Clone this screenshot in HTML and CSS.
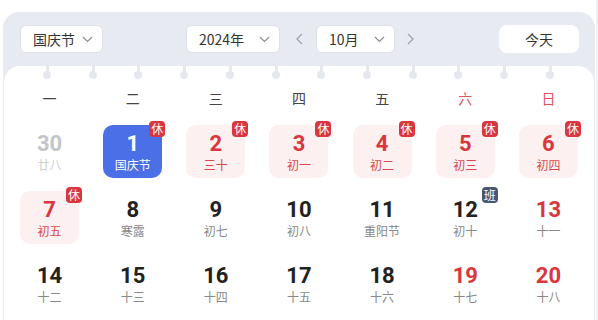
FILE: index.html
```html
<!DOCTYPE html>
<html lang="zh-CN">
<head>
    <meta charset="UTF-8">
    <meta name="viewport" content="width=device-width, initial-scale=1.0">
    <title>日历</title>
    <link rel="stylesheet" href="styles.css">
</head>
<body>
<div class="page">
    <div class="calendar">
        <div class="toolbar">
            <div class="select holiday">
                <span>国庆节</span>
                <svg class="chevron" width="11" height="7" viewBox="0 0 11 7"><path d="M1 1l4.5 4.5L10 1" fill="none" stroke="#8a8d96" stroke-width="1.2"/></svg>
            </div>
            <div class="select year">
                <span>2024年</span>
                <svg class="chevron" width="11" height="7" viewBox="0 0 11 7"><path d="M1 1l4.5 4.5L10 1" fill="none" stroke="#8a8d96" stroke-width="1.2"/></svg>
            </div>
            <button class="arrow prev">
                <svg width="7" height="12" viewBox="0 0 7 12"><path d="M6 1L1 6l5 5" fill="none" stroke="#a0a3ab" stroke-width="1.3"/></svg>
            </button>
            <div class="select month">
                <span>10月</span>
                <svg class="chevron" width="11" height="7" viewBox="0 0 11 7"><path d="M1 1l4.5 4.5L10 1" fill="none" stroke="#8a8d96" stroke-width="1.2"/></svg>
            </div>
            <button class="arrow next">
                <svg width="7" height="12" viewBox="0 0 7 12"><path d="M1 1l5 5-5 5" fill="none" stroke="#a0a3ab" stroke-width="1.3"/></svg>
            </button>
            <button class="today">今天</button>
        </div>

        <div class="panel">
            <div class="rings">
                <i></i><i></i><i></i><i></i><i></i><i></i>
                <i></i><i></i><i></i><i></i><i></i><i></i>
            </div>

            <div class="weekdays">
                <span>一</span><span>二</span><span>三</span><span>四</span><span>五</span>
                <span class="weekend">六</span><span class="weekend">日</span>
            </div>

            <div class="days">
                <div class="day other"><b>30</b><small>廿八</small></div>
                <div class="day selected"><b>1</b><small>国庆节</small><em class="tag rest">休</em></div>
                <div class="day holiday"><b>2</b><small>三十</small><em class="tag rest">休</em></div>
                <div class="day holiday"><b>3</b><small>初一</small><em class="tag rest">休</em></div>
                <div class="day holiday"><b>4</b><small>初二</small><em class="tag rest">休</em></div>
                <div class="day holiday"><b>5</b><small>初三</small><em class="tag rest">休</em></div>
                <div class="day holiday"><b>6</b><small>初四</small><em class="tag rest">休</em></div>

                <div class="day holiday"><b>7</b><small>初五</small><em class="tag rest">休</em></div>
                <div class="day"><b>8</b><small>寒露</small></div>
                <div class="day"><b>9</b><small>初七</small></div>
                <div class="day"><b>10</b><small>初八</small></div>
                <div class="day"><b>11</b><small>重阳节</small></div>
                <div class="day"><b>12</b><small>初十</small><em class="tag work">班</em></div>
                <div class="day weekend"><b>13</b><small>十一</small></div>

                <div class="day"><b>14</b><small>十二</small></div>
                <div class="day"><b>15</b><small>十三</small></div>
                <div class="day"><b>16</b><small>十四</small></div>
                <div class="day"><b>17</b><small>十五</small></div>
                <div class="day"><b>18</b><small>十六</small></div>
                <div class="day weekend"><b>19</b><small>十七</small></div>
                <div class="day weekend"><b>20</b><small>十八</small></div>
            </div>
        </div>
    </div>
</div>
</body>
</html>
```

FILE: styles.css
```css
body {
    margin: 0;
    padding: 0;
    background-color: #fff;
    font-family: "Noto Sans CJK SC", "Noto Sans", sans-serif;
    color: #333;
}

.page {
    height: 320px;
    overflow: hidden;
    border-right: 2px solid #f0f1f3;
    box-sizing: border-box;
}

.calendar {
    margin: 12px 1px 0 3px;
    height: 308px;
    background-color: #e8eaf2;
    border-radius: 16px 16px 0 0;
    display: flex;
    flex-direction: column;
}

.toolbar {
    height: 54px;
    flex-shrink: 0;
    display: flex;
    align-items: center;
    padding: 0 16px 0 17px;
}

.select {
    height: 28px;
    box-sizing: border-box;
    background-color: #fff;
    border: 1px solid #dfe1e8;
    border-radius: 6px;
    display: flex;
    align-items: center;
    justify-content: space-between;
    padding: 0 9px 0 12px;
    font-size: 14px;
    color: #333;
}

.holiday {
    width: 83px;
}

.year {
    width: 94px;
    margin-left: 83px;
}

.month {
    width: 79px;
}

.arrow {
    width: 22px;
    height: 28px;
    border: none;
    background: none;
    padding: 0;
    display: flex;
    align-items: center;
    justify-content: center;
    cursor: pointer;
}

.prev {
    margin: 0 6px 0 8px;
}

.next {
    margin-left: 4px;
}

.today {
    margin-left: auto;
    width: 80px;
    height: 28px;
    border: none;
    border-radius: 8px;
    background-color: #fff;
    font-family: inherit;
    font-size: 14px;
    color: #333;
    cursor: pointer;
}

.panel {
    flex: 1;
    margin: 0 1px;
    background-color: #fff;
    border-radius: 16px 16px 0 0;
}

.rings {
    height: 14px;
    display: flex;
    justify-content: space-between;
    padding: 0 40px 0 39px;
}

.rings i {
    position: relative;
    width: 8px;
    height: 13px;
}

.rings i::before {
    content: "";
    position: absolute;
    left: 3px;
    top: -1px;
    width: 3px;
    height: 7px;
    background-color: #e6e8f0;
}

.rings i::after {
    content: "";
    position: absolute;
    left: 0;
    top: 5px;
    width: 8px;
    height: 8px;
    border-radius: 50%;
    background-color: #e6e8f0;
}

.weekdays {
    display: grid;
    grid-template-columns: repeat(7, 1fr);
    padding: 0 4px;
    height: 36px;
    align-items: center;
    text-align: center;
    font-size: 14px;
    color: #444;
}

.weekdays .weekend {
    color: #e0555c;
}

.days {
    display: grid;
    grid-template-columns: repeat(7, 1fr);
    row-gap: 13px;
    padding: 9px 4px 0;
}

.day {
    position: relative;
    justify-self: center;
    width: 59px;
    height: 53px;
    box-sizing: border-box;
    padding-top: 6px;
    border-radius: 10px;
    display: flex;
    flex-direction: column;
    align-items: center;
    text-align: center;
}

.day b {
    font-family: Roboto, "DejaVu Sans", sans-serif;
    font-weight: 700;
    font-size: 22px;
    line-height: 26px;
    color: #222;
}

.day small {
    font-size: 12px;
    line-height: 16px;
    color: #888;
}

.day.other b {
    color: #c4c5c8;
}

.day.other small {
    color: #cfd0d3;
}

.day.weekend b {
    color: #d9363e;
}

.day.holiday {
    background-color: #fdf0f0;
}

.day.holiday b {
    color: #d9363e;
}

.day.holiday small {
    color: #d9474e;
}

.day.selected {
    background-color: #4b6fe6;
}

.day.selected b,
.day.selected small {
    color: #fff;
}

.tag {
    position: absolute;
    top: -4px;
    right: -3px;
    width: 16px;
    height: 16px;
    border-radius: 4px;
    font-style: normal;
    font-size: 12px;
    line-height: 16px;
    color: #fff;
    text-align: center;
}

.tag.rest {
    background-color: #d9363e;
}

.tag.work {
    background-color: #4a5673;
}
```
